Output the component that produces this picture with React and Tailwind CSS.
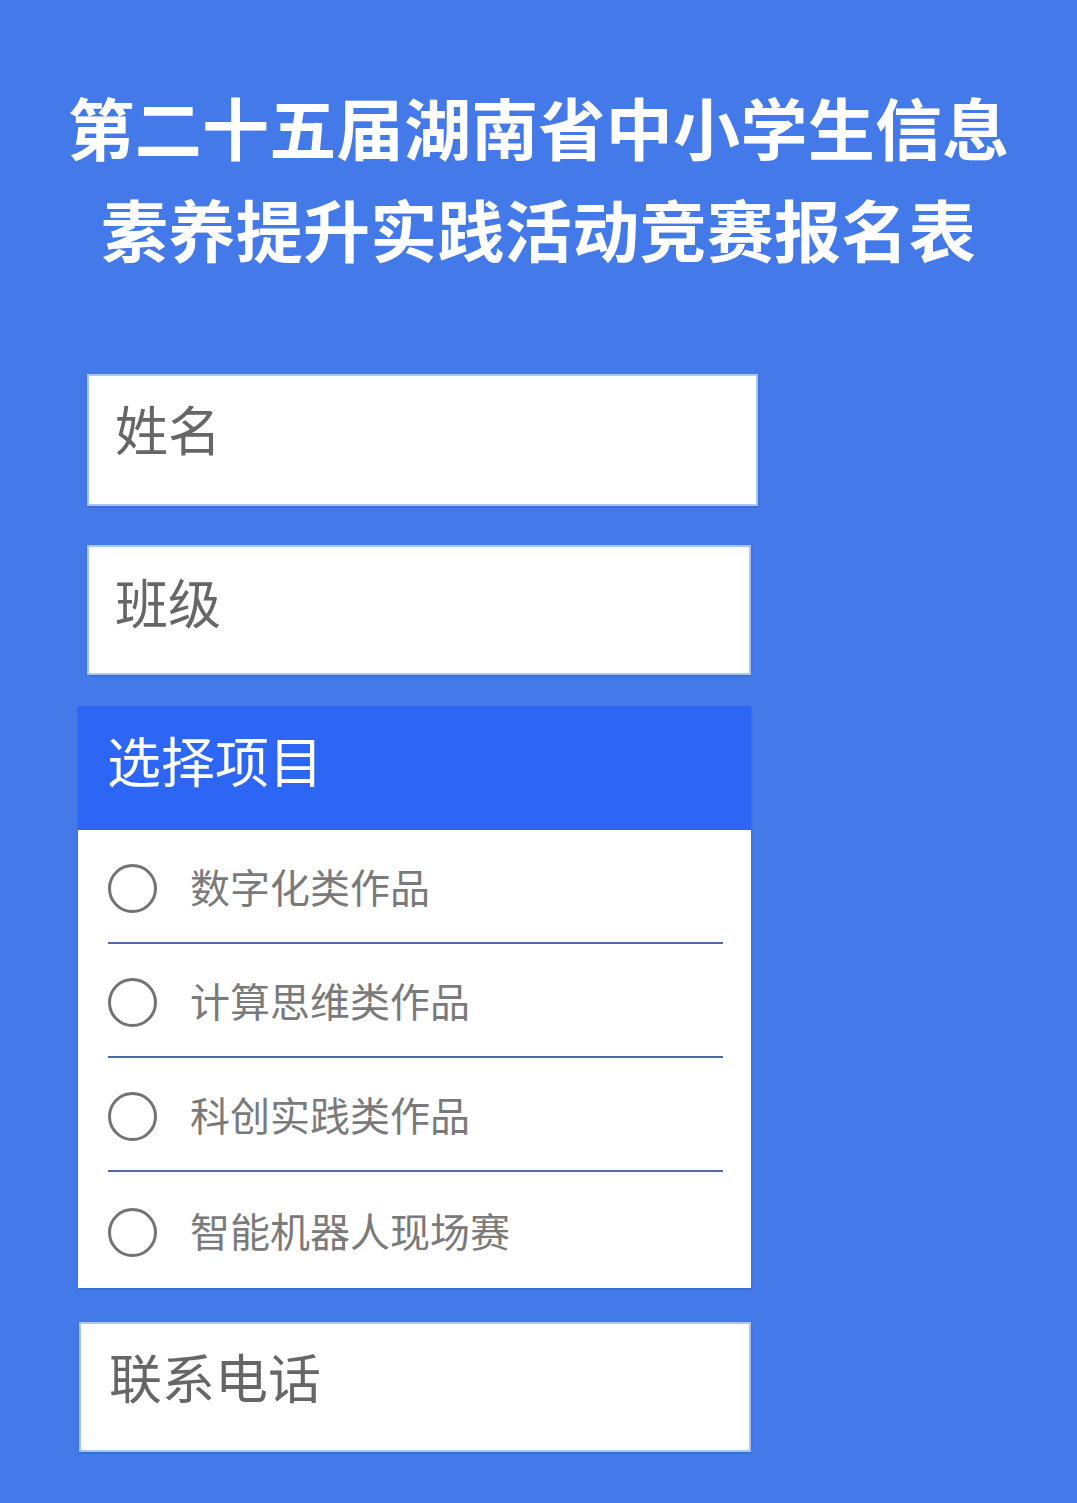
const options = ["数字化类作品", "计算思维类作品", "科创实践类作品", "智能机器人现场赛"];

function Field({ label, className }) {
  return (
    <div
      className={`bg-white border-2 border-[#a9c6f5] shadow-[0_1px_2px_rgba(30,60,140,0.35)] text-[#666666] text-[53px] leading-[53px] ${className}`}
    >
      {label}
    </div>
  );
}

export default function App() {
  return (
    <div
      className="min-h-[1503px] bg-[#4479e9] flex flex-col"
      style={{ fontFamily: '"Noto Sans CJK SC", "Noto Sans", sans-serif' }}
    >
      {/* 标题 */}
      <h1 className="pt-[75px] text-center text-white font-bold text-[67px] leading-[102px] tracking-[0.3px]">
        第二十五届湖南省中小学生信息
        <br />
        素养提升实践活动竞赛报名表
      </h1>

      <div className="mt-[95px] flex flex-col">
        <Field label="姓名" className="ml-[87px] w-[671px] h-[132px] pl-[26px] pt-[26px]" />
        <Field label="班级" className="ml-[87px] w-[664px] h-[130px] mt-[39px] pl-[26px] pt-[28px]" />

        {/* 选择项目 */}
        <div className="ml-[78px] w-[673px] mt-[31px] bg-white shadow-[0_1px_2px_rgba(30,60,140,0.35)]">
          <div className="h-[124px] bg-[#2d65f4] text-white text-[54px] leading-[54px] pl-[29px] pt-[27px]">
            选择项目
          </div>
          {options.map((opt, i) => (
            <div key={opt}>
              <div
                className={`flex items-center pl-[30px] pt-[4px] ${
                  i === options.length - 1 ? "h-[116px]" : "h-[112px]"
                }`}
              >
                <span className="w-[49px] h-[49px] rounded-full border-[3px] border-[#737373] shrink-0" />
                <span className="ml-[33px] text-[40px] leading-[40px] text-[#7a7a7a] -mt-[4px]">{opt}</span>
              </div>
              {i < options.length - 1 && (
                <div className="ml-[30px] mr-[28px] h-[2px] bg-[#4c6aa6]" />
              )}
            </div>
          ))}
        </div>

        <Field label="联系电话" className="ml-[79px] w-[672px] h-[130px] mt-[34px] pl-[28px] pt-[26px]" />
      </div>
    </div>
  );
}
